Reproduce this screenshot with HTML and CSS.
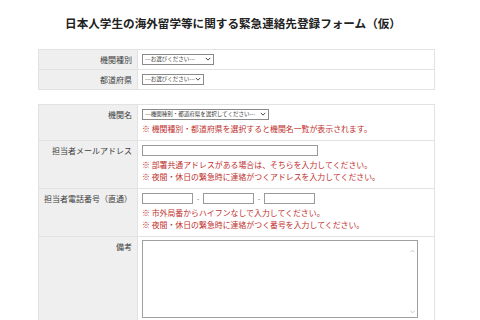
FILE: index.html
```html
<!DOCTYPE html>
<html lang="ja">
<head>
<meta charset="utf-8">
<title>緊急連絡先登録フォーム</title>
<link rel="stylesheet" href="styles.css">
</head>
<body>
<div class="page">
  <h1 class="title">日本人学生の海外留学等に関する緊急連絡先登録フォーム（仮）</h1>

  <table class="form-table">
    <tr>
      <th>機関種別</th>
      <td class="short">
        <span class="sel" style="width:72px"><select><option>---お選びください---</option></select><svg class="chev" viewBox="0 0 8 5"><path d="M1 1l3 3 3-3" fill="none" stroke="#333" stroke-width="1.2"/></svg></span>
      </td>
    </tr>
    <tr>
      <th>都道府県</th>
      <td class="short">
        <span class="sel" style="width:62px"><select><option>---お選びください---</option></select><svg class="chev" viewBox="0 0 8 5"><path d="M1 1l3 3 3-3" fill="none" stroke="#333" stroke-width="1.2"/></svg></span>
      </td>
    </tr>
  </table>

  <table class="form-table second">
    <tr>
      <th>機関名</th>
      <td>
        <span class="sel" style="width:127px"><select><option>---機関種別・都道府県を選択してください---</option></select><svg class="chev" viewBox="0 0 8 5"><path d="M1 1l3 3 3-3" fill="none" stroke="#333" stroke-width="1.2"/></svg></span>
        <div class="notes">
          <p>※ 機関種別・都道府県を選択すると機関名一覧が表示されます。</p>
        </div>
      </td>
    </tr>
    <tr>
      <th>担当者メールアドレス</th>
      <td>
        <input class="txt email" type="text">
        <div class="notes">
          <p>※ 部署共通アドレスがある場合は、そちらを入力してください。</p>
          <p>※ 夜間・休日の緊急時に連絡がつくアドレスを入力してください。</p>
        </div>
      </td>
    </tr>
    <tr>
      <th>担当者電話番号（直通）</th>
      <td>
        <div class="tel">
          <input class="txt telbox" type="text"><span class="dash">-</span><input class="txt telbox" type="text"><span class="dash">-</span><input class="txt telbox" type="text">
        </div>
        <div class="notes">
          <p>※ 市外局番からハイフンなしで入力してください。</p>
          <p>※ 夜間・休日の緊急時に連絡がつく番号を入力してください。</p>
        </div>
      </td>
    </tr>
    <tr>
      <th>備考</th>
      <td class="memo">
        <div class="memo-box">
          <textarea></textarea>
          <svg class="sb-arrow up" viewBox="0 0 6 4"><path d="M0.5 3.5L3 1l2.5 2.5" fill="none" stroke="#b5b5b5" stroke-width="0.9"/></svg>
          <svg class="sb-arrow down" viewBox="0 0 6 4"><path d="M0.5 0.5L3 3l2.5-2.5" fill="none" stroke="#b5b5b5" stroke-width="0.9"/></svg>
        </div>
      </td>
    </tr>
  </table>
</div>
</body>
</html>
```

FILE: styles.css
```css
html, body {
  margin: 0;
  padding: 0;
  background: #fff;
}
body {
  font-family: "Noto Sans CJK JP", "Noto Sans", sans-serif;
  color: #333;
}
.page {
  width: 397px;
  margin-left: 38px;
  padding-top: 15px;
}
.title {
  margin: 0;
  padding-right: 7px;
  font-size: 11.6px;
  line-height: 16px;
  font-weight: bold;
  text-align: center;
  color: #222;
}
.form-table {
  width: 100%;
  border-collapse: collapse;
  margin-top: 18px;
  border: 1px solid #e2e2e2;
}
.form-table.second {
  margin-top: 14px;
}
.form-table th {
  width: 88px;
  background: #efefef;
  font-size: 8px;
  line-height: 11px;
  font-weight: normal;
  color: #3d3d3d;
  text-align: right;
  vertical-align: top;
  padding: 4px 5px 0 5px;
  border-top: 1px solid #e2e2e2;
  border-right: 1px solid #e2e2e2;
  white-space: nowrap;
}
.form-table td {
  padding: 4px 5px 5px 4px;
  vertical-align: top;
  border-top: 1px solid #e2e2e2;
}
.form-table td.short {
  padding-bottom: 4px;
}
.sel {
  position: relative;
  display: block;
  height: 11px;
}
.sel select {
  appearance: none;
  -webkit-appearance: none;
  display: block;
  width: 100%;
  height: 11px;
  box-sizing: border-box;
  margin: 0;
  padding: 0 8px 0 2px;
  border: 1px solid #8a8a8a;
  border-radius: 0;
  background: #fff;
  font-family: "Noto Sans CJK JP", sans-serif;
  font-size: 5.5px;
  line-height: 9px;
  color: #333;
}
.chev {
  position: absolute;
  right: 3px;
  top: 3px;
  width: 6px;
  height: 4px;
}
.notes {
  margin-top: 3px;
}
.notes p {
  margin: 0;
  font-size: 7.9px;
  line-height: 12px;
  color: #c0302e;
  white-space: nowrap;
}
.txt {
  display: block;
  box-sizing: border-box;
  height: 11px;
  margin: 0;
  padding: 0;
  border: 1px solid #9a9a9a;
  border-radius: 0;
  background: #fff;
}
.email {
  width: 176px;
}
.tel {
  display: flex;
  align-items: center;
}
.telbox {
  width: 51px;
}
.dash {
  width: 10px;
  text-align: center;
  font-size: 7px;
  line-height: 11px;
  color: #666;
}
.form-table td.memo {
  padding-top: 3px;
  padding-bottom: 6px;
}
.memo-box {
  position: relative;
  width: 276px;
}
textarea {
  display: block;
  box-sizing: border-box;
  width: 276px;
  height: 78px;
  margin: 0;
  border: 1px solid #a0a0a0;
  border-radius: 0;
  resize: none;
  overflow-y: scroll;
  background: #fff;
}
textarea::-webkit-scrollbar {
  width: 10px;
}
textarea::-webkit-scrollbar-track {
  background: #f6f6f6;
  border-left: 1px solid #ececec;
}
.sb-arrow {
  position: absolute;
  right: 3px;
  width: 5px;
  height: 4px;
}
.sb-arrow.up {
  top: 9px;
}
.sb-arrow.down {
  bottom: 4px;
}
```
